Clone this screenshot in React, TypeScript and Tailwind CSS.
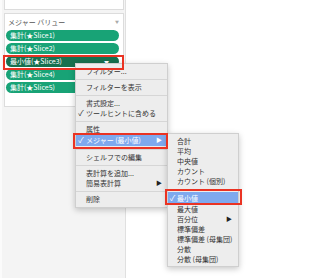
import React from 'react';

type Row =
  | { kind: 'item'; label: string; check?: boolean; arrow?: boolean; active?: boolean }
  | { kind: 'sep' };

const mainMenu: Row[] = [
  { kind: 'item', label: 'フィルター...' },
  { kind: 'sep' },
  { kind: 'item', label: 'フィルターを表示' },
  { kind: 'sep' },
  { kind: 'item', label: '書式設定...' },
  { kind: 'item', label: 'ツールヒントに含める', check: true },
  { kind: 'sep' },
  { kind: 'item', label: '属性' },
  { kind: 'item', label: 'メジャー (最小値)', check: true, arrow: true, active: true },
  { kind: 'sep' },
  { kind: 'item', label: 'シェルフでの編集' },
  { kind: 'sep' },
  { kind: 'item', label: '表計算を追加...' },
  { kind: 'item', label: '簡易表計算', arrow: true },
  { kind: 'sep' },
  { kind: 'item', label: '削除' },
];

const subMenu: Row[] = [
  { kind: 'item', label: '合計' },
  { kind: 'item', label: '平均' },
  { kind: 'item', label: '中央値' },
  { kind: 'item', label: 'カウント' },
  { kind: 'item', label: 'カウント (個別)' },
  { kind: 'sep' },
  { kind: 'item', label: '最小値', check: true, active: true },
  { kind: 'item', label: '最大値' },
  { kind: 'item', label: '百分位', arrow: true },
  { kind: 'item', label: '標準偏差' },
  { kind: 'item', label: '標準偏差 (母集団)' },
  { kind: 'item', label: '分散' },
  { kind: 'item', label: '分散 (母集団)' },
];

const pills = [
  { label: '集計(★Slice1)' },
  { label: '集計(★Slice2)' },
  { label: '最小値(★Slice3)', selected: true },
  { label: '集計(★Slice4)' },
  { label: '集計(★Slice5)' },
];

function Menu({ rows, checkCol, arrowRight }: { rows: Row[]; checkCol: string; arrowRight: string }) {
  return (
    <div className="flex flex-col">
      {rows.map((r, i) =>
        r.kind === 'sep' ? (
          <div key={i} className="h-[6px] flex items-center">
            <div className="h-px w-full bg-[#d6d6d6]" />
          </div>
        ) : (
          <div
            key={i}
            className={`relative flex items-center ${r.active ? 'h-[12px] bg-[#7ea9ee] text-white' : 'h-[10px] text-[#333]'}`}
          >
            <span className={`${checkCol} text-center text-[8px] leading-none`}>{r.check ? '✓' : ''}</span>
            <span className="text-[7px] leading-none whitespace-nowrap">{r.label}</span>
            {r.arrow && (
              <span className={`absolute ${arrowRight} text-[6px] leading-none ${r.active ? 'text-white' : 'text-[#222]'}`}>▶</span>
            )}
          </div>
        )
      )}
    </div>
  );
}

export default function App() {
  return (
    <div className="relative w-[318px] h-[278px] overflow-hidden bg-white font-['Noto_Sans_CJK_JP','Liberation_Sans',sans-serif]">
      {/* sidebar */}
      <div className="w-[126px] h-full bg-[#f4f4f4] border-l-2 border-l-[#fbfbfb] border-r border-r-[#e0e0e0] pl-[2px] pr-[1px] flex flex-col">
        <div className="h-[10px] bg-white border border-t-0 border-[#dcdcdc]" />
        <div className="mt-[3px] h-[94px] bg-white border border-[#dcdcdc] pl-px pr-[4px] flex flex-col">
          <div className="flex items-center justify-between h-[16px] pl-[2px]">
            <span className="text-[7px] leading-none text-[#555]">メジャー バリュー</span>
            <span className="text-[4px] leading-none text-[#aaa]">▼</span>
          </div>
          <div className="flex flex-col gap-[2px]">
            {pills.map((p) => (
              <div
                key={p.label}
                className={`h-[11px] rounded-full flex items-center justify-between pl-[4px] pr-[10px] ${p.selected ? 'bg-[#17704f]' : 'bg-[#18a376]'}`}
              >
                <span className="text-[7px] leading-none text-white whitespace-nowrap">{p.label}</span>
                {p.selected && <span className="text-[5px] leading-none text-white">▼</span>}
              </div>
            ))}
          </div>
        </div>
      </div>

      {/* context menu */}
      <div className="absolute left-[75px] top-[63px] w-[93px] h-[145px] bg-[#ededed] border border-[#cfcfcf] pt-[2px] shadow-[0_2px_6px_rgba(0,0,0,0.22)]">
        <Menu rows={mainMenu} checkCol="w-[10px]" arrowRight="right-[5px]" />
      </div>

      {/* submenu */}
      <div className="absolute left-[167px] top-[133px] w-[72px] h-[134px] bg-[#ededed] border border-[#cfcfcf] pt-[2px] shadow-[0_2px_6px_rgba(0,0,0,0.22)]">
        <Menu rows={subMenu} checkCol="w-[9px]" arrowRight="right-[6px]" />
      </div>

      {/* red annotation boxes */}
      <div className="absolute left-[3px] top-[55px] w-[121px] h-[15px] border-2 border-[#ea3323]" />
      <div className="absolute left-[73px] top-[133px] w-[95px] h-[16px] border-2 border-[#ea3323]" />
      <div className="absolute left-[165px] top-[189px] w-[77px] h-[16px] border-2 border-[#ea3323]" />
    </div>
  );
}
